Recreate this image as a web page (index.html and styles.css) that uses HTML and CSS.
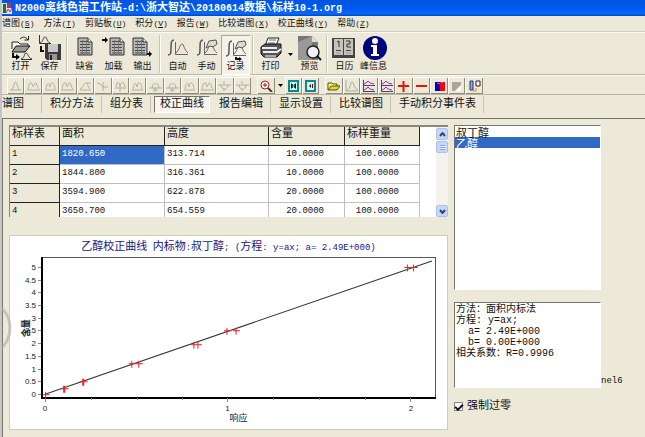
FILE: index.html
```html
<!DOCTYPE html>
<html lang="zh-CN">
<head>
<meta charset="utf-8">
<title>N2000离线色谱工作站</title>
<link rel="stylesheet" href="styles.css">
</head>
<body>
<svg class="defs" aria-hidden="true">
  <symbol id="doc" viewBox="0 0 16 19">
    <path d="M1 1h10l4 4v13H1z" fill="#b8b8b8" stroke="#333"/>
    <path d="M3 4.500h8M3 7.500h10M3 10.500h10M3 13.500h10M3 16h10" stroke="#444"/>
    <path d="M5.500 3v14M9.500 3v14" stroke="#777"/>
    <path d="M11 1v4h4" fill="#eee" stroke="#333"/>
  </symbol>
  <symbol id="curve" viewBox="0 0 22 17">
    <path d="M1 16c3 0 3-2 3-7s0-8 3-8" fill="none" stroke="#555" stroke-width="1.500"/>
    <path d="M8.500 3v12.500H21M9 14c3-2 4-9 6-9s2 6 6 9" fill="none" stroke="#666"/>
  </symbol>
  <symbol id="peak" viewBox="0 0 13 12"><path d="M1 10h11M2 10c3-1 3-8 4.500-8s2 7 4.500 8"/></symbol>
  <symbol id="hills" viewBox="0 0 13 12"><path d="M0 10h13M1 9c1-6 3-8 4-5s1 4 2 1 2-3 3 0 1 3 2 4"/></symbol>
  <symbol id="twin" viewBox="0 0 13 12"><path d="M1 10h11M2 9c1-7 3-7 4-2 1-6 4-6 5 2"/></symbol>
  <symbol id="slope" viewBox="0 0 13 12"><path d="M1 10h11M1 9c3-1 4-6 6-6s2 5 4 6M8 3h4"/></symbol>
  <symbol id="down" viewBox="0 0 13 12"><path d="M1 3c4 0 5 4 6 4h5M7 2v9"/></symbol>
  <symbol id="split" viewBox="0 0 13 12"><path d="M1 8h11M2 7c1-6 3-6 4-1 1-5 4-5 5 1M6 4v8"/></symbol>
  <symbol id="dome" viewBox="0 0 13 12"><path d="M0 8h13M3 8c0-6 7-6 7 0M6 8v4M4 10h5"/></symbol>
  <symbol id="dip" viewBox="0 0 13 12"><path d="M0 5h13M3 5c1 6 6 6 7 0M6 1v3M6 8v3"/></symbol>
  <symbol id="graphs" viewBox="0 0 13 12"><path d="M1.500 0v12M1 5.500h12M1 11.500h12" stroke="#446"/><path d="M2 4l2-1 2-2 2 2 4 1M2 10l2-1 2-2 2 2 4 1" stroke="#a828b8"/></symbol>
</svg>

<header class="titlebar">
  <svg class="appicon" viewBox="0 0 11 13" aria-hidden="true"><path d="M0 1h8v11H0z" fill="#d8e8d0"/><path d="M1 2h3v9H1z" fill="#216b42"/><path d="M5 1h4v6H5z" fill="#b03070"/><path d="M4 6h6v6H4z" fill="#dfe8ff"/><path d="M4 11l2-4 2 3 2-4" stroke="#c03050" fill="none"/></svg>
  <h1>N2000<span class="han">离线色谱工作站</span>-d:\<span class="han">浙大智达</span>\20180614<span class="han">数据</span>\<span class="han">标样</span>10-1.org</h1>
</header>

<nav class="menu">
  <a href="#">谱图<kbd>(<u>S</u>)</kbd></a>
  <a href="#">方法<kbd>(<u>T</u>)</kbd></a>
  <a href="#">剪贴板<kbd>(<u>U</u>)</kbd></a>
  <a href="#">积分<kbd>(<u>V</u>)</kbd></a>
  <a href="#">报告<kbd>(<u>W</u>)</kbd></a>
  <a href="#">比较谱图<kbd>(<u>X</u>)</kbd></a>
  <a href="#">校正曲线<kbd>(<u>Y</u>)</kbd></a>
  <a href="#">帮助<kbd>(<u>Z</u>)</kbd></a>
</nav>

<div class="toolbar">
  <button class="tool"><svg viewBox="0 0 29 26"><path d="M6 14V7h6l2 2h8v3" fill="#f8f8f0" stroke="#222"/><path d="M6 17l4-6h14l-5 6z" fill="#999" stroke="#111"/><path d="M14 4c3-3 6-2 8 1M22.500 1v4h-4" fill="none" stroke="#222"/><path d="M7 18v4h4" fill="none" stroke="#111" stroke-width="2"/><path d="M10 19l4 3-4 3z"/><path d="M15 24.500h11M15 24c4-1 3-6 5-6s2 5 6 6" fill="none" stroke="#333"/></svg>打开</button>
  <button class="tool"><svg viewBox="0 0 29 26"><path d="M4.500 0v8.500H16M5 8c3-1 3-6 5-6s2 5 5 6" fill="none" stroke="#333"/><path d="M6 11v5h3" stroke="#111" stroke-width="2" fill="none"/><path d="M10 9h16v16H12l-2-2z" fill="#3b3b3b"/><path d="M13 9h10v8H13z" fill="#c8c8c8"/><path d="M14 19h8v6h-8z" fill="#999"/><path d="M15 20h2v5h-2z" fill="#222"/></svg>保存</button>
  <i class="rule"></i>
  <button class="tool"><svg viewBox="0 0 29 26"><use href="#doc" x="7" y="2" width="16" height="19"/></svg>缺省</button>
  <button class="tool"><svg viewBox="0 0 29 26"><use href="#doc" x="10" y="2" width="16" height="19"/><path d="M3 5h4" stroke="#111" stroke-width="2"/><path d="M6 2l3 3-3 3z"/></svg>加载</button>
  <button class="tool"><svg viewBox="0 0 29 26"><use href="#doc" x="4" y="2" width="16" height="19"/><path d="M19 19h3" stroke="#111" stroke-width="2"/><path d="M21 16l3 3-3 3z"/></svg>输出</button>
  <i class="rule"></i>
  <button class="tool"><svg viewBox="0 0 29 26"><use href="#curve" x="4" y="4" width="22" height="17"/></svg>自动</button>
  <button class="tool"><svg viewBox="0 0 29 26"><use href="#curve" x="4" y="4" width="22" height="17"/><path d="M14 13l3-7 7-1 1 4-4 3-3-1z" fill="#dddcd0" stroke="#555"/></svg>手动</button>
  <button class="tool pressed"><svg viewBox="0 0 29 26"><use href="#curve" x="4" y="5" width="22" height="17"/><path d="M14 14l3-7 7-1 1 4-4 3-3-1z" fill="#dddcd0" stroke="#555"/><path d="M15 22v2h4" stroke="#111" fill="none" stroke-width="2"/><path d="M18 22l3 2-3 2z"/></svg>记录</button>
  <i class="rule"></i>
  <button class="tool"><svg viewBox="0 0 29 26"><path d="M9 11l3-8h11l-3 8z" fill="#fff" stroke="#222"/><path d="M13 5h7M12 8h7" stroke="#666"/><path d="M5 12l4-3h16v9l-4 4H8l-3-3z" fill="#555" stroke="#111"/><path d="M6 13h15M7 17h14l4-3" stroke="#eee" stroke-width="2" fill="none"/><path d="M9 21h11" stroke="#aaa" stroke-width="2"/></svg>打印</button>
  <button class="drop" aria-label="打印选项"><svg viewBox="0 0 5 3"><path d="M0 0h5L2.500 3z"/></svg></button>
  <button class="tool"><svg viewBox="0 0 29 26"><path d="M3 1h14l6 6v18H3z" fill="#777"/><path d="M3 7l14-6v24H3z" fill="#999"/><path d="M17 1v6h6z" fill="#ddd"/><circle cx="18" cy="17" r="6" fill="#eef2f4" stroke="#222" stroke-width="1.500"/><path d="M22 21l4 4" stroke="#111" stroke-width="2"/></svg>预览</button>
  <i class="rule"></i>
  <button class="tool"><svg viewBox="0 0 29 26"><path d="M2 3h23v20H2z" fill="#444"/><path d="M4 4h9v16H4zM14 4h9v16h-9z" fill="#c5c5bd"/><path d="M7 7l2-1v6M16 6h4v3h-3v3h4" stroke="#333" fill="none"/><path d="M6 15.500h5M16 15.500h5" stroke="#444"/><path d="M6 18h5M16 18h5" stroke="#999"/></svg>日历</button>
  <button class="tool"><svg viewBox="0 0 29 26"><circle cx="16" cy="13" r="12" fill="#00047e"/><circle cx="16" cy="6" r="3" fill="#fff"/><path d="M12 10h6v9h2v2h-8v-2h2v-7h-2z" fill="#fff"/></svg>峰信息</button>
</div>

<div class="toolbar small">
  <div class="peaks">
    <button aria-label="峰1"><svg><use href="#peak"/></svg></button><button aria-label="峰2"><svg><use href="#hills"/></svg></button><button aria-label="峰3"><svg><use href="#twin"/></svg></button><button aria-label="峰4"><svg><use href="#hills"/></svg></button><button aria-label="峰5"><svg><use href="#slope"/></svg></button><button aria-label="峰6"><svg><use href="#down"/></svg></button><button aria-label="峰7"><svg><use href="#split"/></svg></button><button aria-label="峰8"><svg><use href="#twin"/></svg></button><button aria-label="峰9"><svg><use href="#dome"/></svg></button><button aria-label="峰10"><svg><use href="#dome"/></svg></button><button aria-label="峰11"><svg><use href="#twin"/></svg></button><button aria-label="峰12"><svg><use href="#hills"/></svg></button><button aria-label="峰13"><svg><use href="#dip"/></svg></button><button aria-label="峰14"><svg><use href="#dip"/></svg></button>
  </div>
  <div class="view">
    <button aria-label="放大"><svg viewBox="0 0 13 12"><circle cx="5" cy="5" r="4" fill="#fff" stroke="#922"/><path d="M3 5h4M5 3v4" stroke="#c00"/><path d="M8 8l4 4" stroke="#433" stroke-width="2"/></svg></button>
    <button class="drop" aria-label="缩放选项"><svg viewBox="0 0 5 3"><path d="M0 0h5L2.500 3z"/></svg></button>
    <button aria-label="展开"><svg viewBox="0 0 13 12"><path d="M2 1h9v10H2z" fill="#c8ffff" stroke="#188" stroke-width="2"/><path d="M4.500 3.500v5M8.500 3.500v5" stroke="#111"/><path d="M5 4l1 2-1 2M8 4L7 6l1 2" stroke="#111" fill="none"/></svg></button>
    <button aria-label="收缩"><svg viewBox="0 0 13 12"><path d="M2 1h9v10H2z" fill="#c8ffff" stroke="#188" stroke-width="2"/><path d="M7 4v4L5 6zM8 4h1v4H8z" fill="#700"/></svg></button>
  </div>
  <div class="compare">
    <button aria-label="打开谱图"><svg viewBox="0 0 13 12"><path d="M1 10V3h4l1 1h4v2" fill="#ff8" stroke="#550"/><path d="M1 10l3-4h9l-3 4z" fill="#dd3" stroke="#550"/></svg></button><button aria-label="谱峰"><svg viewBox="0 0 13 12"><path d="M1 0v11h12M2 10c4-1 3-8 5-8s2 7 6 8" stroke="#aaa99c" fill="none"/></svg></button><button aria-label="谱图叠加"><svg><use href="#graphs"/></svg></button><button aria-label="谱图对比"><svg><use href="#graphs"/></svg></button><button aria-label="增加"><svg viewBox="0 0 13 12"><path d="M1 6h11M6.500 1v11" stroke="#e81010" stroke-width="2"/></svg></button><button aria-label="删除"><svg viewBox="0 0 13 12"><path d="M1 6h11" stroke="#e81010" stroke-width="2"/></svg></button><button aria-label="颜色"><svg viewBox="0 0 13 12"><path d="M2 2h5v9H2z" fill="#00c"/><path d="M7 2h5v9H7z" fill="#f00"/><path d="M4 3h3v1H4zM8 2h2v1H8z" fill="#f4b"/></svg></button><button aria-label="灰度"><svg viewBox="0 0 13 12"><path d="M2 2h9v9H2z" fill="#aaa798"/><path d="M11 5v6H5z" fill="#fff"/></svg></button><button aria-label="排列"><svg viewBox="0 0 13 12"><path d="M2 1h3v9H2z" fill="#8ae" stroke="#336"/><path d="M8 1h4v5H8z" fill="#fff" stroke="#222"/><path d="M5 11h3V8" stroke="#e80" fill="none"/></svg></button>
  </div>
</div>

<nav class="tabs">
  <a href="#">谱图</a><a href="#">积分方法</a><a href="#">组分表</a><a href="#" class="current" aria-current="page">校正曲线</a><a href="#">报告编辑</a><a href="#">显示设置</a><a href="#">比较谱图</a><a href="#">手动积分事件表</a>
</nav>

<main class="page">
  <svg class="ring" viewBox="0 0 13 64" aria-hidden="true"><circle cx="-18" cy="32" r="28" fill="none" stroke="#aaa" stroke-opacity=".6" stroke-width="3"/></svg>
  <section class="left">
    <div class="sheet">
      <div class="cells">
        <table>
          <thead><tr><th class="c1">标样表</th><th class="c2">面积</th><th class="c3">高度</th><th class="c4">含量</th><th class="c5">标样重量</th></tr></thead>
          <tbody>
            <tr><th>1</th><td class="picked">1820.650</td><td>313.714</td><td class="num">10.0000</td><td class="num">100.0000</td></tr>
            <tr><th>2</th><td>1844.800</td><td>316.361</td><td class="num">10.0000</td><td class="num">100.0000</td></tr>
            <tr><th>3</th><td>3594.900</td><td>622.878</td><td class="num">20.0000</td><td class="num">100.0000</td></tr>
            <tr><th>4</th><td>3650.700</td><td>654.559</td><td class="num">20.0000</td><td class="num">100.0000</td></tr>
          </tbody>
        </table>
      </div>
      <div class="scroll">
        <button aria-label="向上"><svg viewBox="0 0 7 5"><path d="M1 4l2.500-3L6 4"/></svg></button>
        <span class="thumb"></span>
        <button class="end" aria-label="向下"><svg viewBox="0 0 7 5"><path d="M1 1l2.500 3L6 1"/></svg></button>
      </div>
    </div>
    <figure class="chart">
      <figcaption><span class="han">乙醇校正曲线</span> <span class="han">内标物</span>:<span class="han">叔丁醇</span>; (<span class="han">方程</span>: y=ax; a= 2.49E+000)</figcaption>
      <svg class="plot" viewBox="0 0 436 176">
        <path d="M31 4h394v140" class="frame"/>
        <path d="M32 4v141h393" class="axis"/>
        <path class="tick" d="M28 14h3M28 27h3M28 39h3M28 52h3M28 65h3M28 77h3M28 90h3M28 103h3M28 116h3M28 128h3M28 141h3M35 145v4M81 145v2M127 145v2M172 145v2M217 145v4M263 145v2M309 145v2M355 145v2M400 145v4"/>
        <g class="ylab"><text x="26" y="17">5</text><text x="26" y="30">4.5</text><text x="26" y="42">4</text><text x="26" y="55">3.5</text><text x="26" y="68">3</text><text x="26" y="80">2.5</text><text x="26" y="93">2</text><text x="26" y="106">1.5</text><text x="26" y="119">1</text><text x="26" y="131">0.5</text><text x="26" y="144">0</text></g>
        <g class="xlab"><text x="35" y="158">0</text><text x="217" y="158">1</text><text x="400" y="158">2</text></g>
        <text class="name" x="219" y="168">响应</text>
        <text class="name strong" transform="translate(19 75) rotate(-90)">含量</text>
        <path d="M35 141L421 8" class="fit"/>
        <path class="mark" transform="translate(.5 .5)" d="M32 141h7M35 138v7M50 135h7M53 132v7M51 135h7M54 132v7M69 128h7M72 125v7M70 128h7M73 125v7M118 110h7M121 107v7M125 110h7M128 107v7M180 91h7M183 88v7M184 91h7M187 88v7M213 77h7M216 74v7M222 77h7M225 74v7M393 14h7M396 11v7M399 14h7M402 11v7"/>
      </svg>
    </figure>
  </section>
  <aside class="right">
    <select class="list" size="8" aria-label="组分"><option>叔丁醇</option><option selected>乙醇</option></select>
    <div class="result">
      <textarea readonly aria-label="校正结果">方法：面积内标法
方程: y=ax;
  a= 2.49E+000
  b= 0.00E+000
相关系数：R=0.9996</textarea>
      <span class="panel">nel6</span>
    </div>
    <label class="zero"><input type="checkbox" checked>强制过零</label>
  </aside>
</main>
</body>
</html>
```
FILE: styles.css
```css
* { box-sizing: border-box; }

body {
  margin: 0;
  min-height: 100vh;
  display: flex;
  flex-direction: column;
  background: #ece9d8;
  color: #111;
  font: 9px/11px "Liberation Mono", "Noto Sans CJK SC", monospace;
  border-left: 2px solid #c4c3c6;
  overflow: hidden;
}

.defs { position: absolute; width: 0; height: 0; }
.han { font-size: 11px; }
svg { display: block; }

button {
  border: 0;
  padding: 0;
  background: none;
  color: inherit;
  font: inherit;
}

a { color: inherit; text-decoration: none; }

/* Title and menu */

.titlebar {
  display: flex;
  align-items: center;
  gap: 2px;
  height: 16px;
  background: linear-gradient(#0054e0, #0058ee 50%, #0468fc 85%, #0046c4);
  color: #fff;
}

.titlebar h1 {
  margin: 0;
  font-size: 10px;
  line-height: 14px;
  white-space: nowrap;
}

.appicon { width: 11px; height: 13px; }

.menu {
  display: flex;
  gap: 9px;
  height: 16px;
  line-height: 16px;
  border-bottom: 1px solid #cdd0bf;
  white-space: nowrap;
}

.menu kbd { font: 8px "Liberation Mono", monospace; }

/* Toolbars */

.toolbar {
  display: flex;
  height: 43px;
  padding: 2px 4px 0;
  border-top: 1px solid #faf9f2;
  border-bottom: 1px solid #b9b6a5;
}

.tool {
  width: 29px;
  height: 40px;
  display: flex;
  flex-direction: column;
  align-items: center;
  line-height: 13px;
  white-space: nowrap;
}

.tool svg { width: 29px; height: 26px; flex: none; }

.pressed {
  background: #f3f1e8;
  box-shadow: inset 1px 1px #aca899, inset -1px -1px #fff;
}

.rule {
  width: 2px;
  height: 38px;
  margin: 0 2px;
  border-left: 1px solid #c9c5b2;
  border-right: 1px solid #fff;
}

.drop { width: 10px; display: grid; place-items: center; }
.drop svg { width: 5px; height: 3px; }

.small {
  height: 20px;
  padding: 1px 5px 0;
  gap: 6px;
}

.small > div { display: grid; height: 17px; }
.peaks { width: 244px; grid-template-columns: repeat(14, 1fr); }
.view { width: 62px; grid-template-columns: 18px 10px 17px 17px; }
.compare { width: 158px; grid-template-columns: repeat(9, 1fr); }

.small button {
  display: grid;
  place-items: center;
  box-shadow: inset 1px 1px #fff, inset -1px -1px #8f8c7e;
}

.small .drop { box-shadow: none; }
.small button:not(.drop) svg { width: 13px; height: 12px; }
.small use { fill: none; stroke: #b2ae9e; }

/* Page tabs */

.tabs {
  display: flex;
  height: 23px;
  padding-top: 1px;
  font-size: 11px;
  line-height: 16px;
  white-space: nowrap;
}

.tabs a {
  height: 17px;
  padding: 0 7px 0 8px;
  border-right: 1px solid #c9c5b2;
}

.tabs a:first-child { padding: 0 17px 0 0; }

.tabs .current {
  margin: 0 1px 0 3px;
  padding: 0 5px;
  background: #f6f4ec;
  border: 1px solid #fff;
  border-top-color: #77756a;
  border-left-color: #77756a;
  line-height: 14px;
}

/* Calibration page */

.page {
  position: relative;
  flex: 1;
  display: grid;
  grid-template-columns: minmax(0, 1fr) 191px;
  gap: 6px;
  padding: 6px 0 6px 6px;
  border-top: 1px solid #77756a;
  border-left: 1px solid #77756a;
}

.ring {
  position: absolute;
  left: -3px;
  top: 177px;
  width: 13px;
  height: 64px;
  z-index: 1;
}

.left { display: flex; flex-direction: column; gap: 18px; }

.sheet {
  display: flex;
  height: 92px;
  background: #fff;
  border-top: 2px solid #8a887c;
  border-left: 1px solid #8a887c;
  overflow: hidden;
}

.cells { flex: 1; overflow: hidden; }

table {
  table-layout: fixed;
  width: 410px;
  border-collapse: separate;
  border-spacing: 0;
}

.c1 { width: 50px; }
.c2 { width: 105px; }
.c3 { width: 104px; }
.c4 { width: 76px; }
.c5 { width: 75px; }

th, td {
  height: 19px;
  padding: 0 2px;
  text-align: left;
  vertical-align: top;
  font-weight: normal;
  line-height: 16px;
  border-right: 1px solid #c0c0c0;
  border-bottom: 1px solid #c0c0c0;
}

th {
  background: #ece9d8;
  border-color: #222;
}

thead th { font-size: 11px; line-height: 14px; }
td.num { text-align: right; padding-right: 20px; }
td.picked { background: #316ac5; color: #fff; }

.scroll {
  width: 12px;
  display: flex;
  flex-direction: column;
  gap: 1px;
  padding-top: 1px;
  background: #f4f3ee;
}

.scroll button, .thumb {
  height: 12px;
  background: #c6d6fb;
  border: 1px solid #aebfe8;
  border-radius: 2px;
  display: grid;
  place-items: center;
}

.scroll .end { margin-top: auto; }
.scroll svg { width: 7px; height: 5px; fill: none; stroke: #35466e; stroke-width: 2; }
.thumb::before { content: ""; width: 5px; height: 5px; background: repeating-linear-gradient(#8ca4dc 0 1px, #e8efff 1px 2px); }

.chart {
  margin: 0;
  padding-top: 5px;
  background: #fff;
  border: 1px solid #cfccbd;
}

.chart figcaption {
  text-align: center;
  height: 12px;
  line-height: 12px;
  color: #16167c;
  white-space: nowrap;
}

.plot { width: 100%; }
.plot text { font: 8px "Liberation Sans", sans-serif; fill: #222; }
.plot .name { font: 9px "Noto Sans CJK SC", sans-serif; }
.plot .strong { font-weight: bold; text-anchor: middle; }
.ylab { text-anchor: end; }
.xlab { text-anchor: middle; }
.plot path { fill: none; shape-rendering: crispEdges; }
.frame { stroke: #555; }
.axis { stroke: #000; stroke-width: 2; }
.tick { stroke: #888; }
.plot .fit { stroke: #333; shape-rendering: auto; }
.plot .mark { stroke: #f02020; shape-rendering: auto; }

.right { display: flex; flex-direction: column; align-items: flex-start; }

.list, textarea {
  margin: 0;
  width: 147px;
  background: #fff;
  border: 1px solid #fff;
  border-top-color: #77756a;
  border-left-color: #77756a;
  border-radius: 0;
  outline: 0;
  resize: none;
  overflow: hidden;
  color: #111;
}

.list {
  height: 165px;
  padding: 0;
  font: 11px/11px "Noto Sans CJK SC", sans-serif;
  scrollbar-width: none;
}

.list option {
  display: flex;
  align-items: center;
  height: 11px;
  min-height: 11px;
  padding: 0 1px;
  overflow: visible;
}

.list option:checked { background: #316ac5 linear-gradient(#316ac5, #316ac5); color: #fff; }

.result {
  display: flex;
  align-items: flex-end;
  margin-top: 12px;
}

textarea {
  height: 86px;
  padding: 1px;
  font: 10px/11px "Liberation Mono", "Noto Sans CJK SC", monospace;
}

.panel { line-height: 14px; }

.zero {
  display: flex;
  align-items: center;
  gap: 4px;
  margin-top: 10px;
  font-size: 11px;
  line-height: 16px;
}

.zero input {
  appearance: none;
  margin: 0;
  width: 9px;
  height: 9px;
  background: #fff;
  border: 1px solid #8a887c;
  display: grid;
  place-items: center;
}

.zero input:checked::before {
  content: "";
  width: 6px;
  height: 3px;
  border-left: 2px solid #111;
  border-bottom: 2px solid #111;
  transform: rotate(-45deg);
}
```
